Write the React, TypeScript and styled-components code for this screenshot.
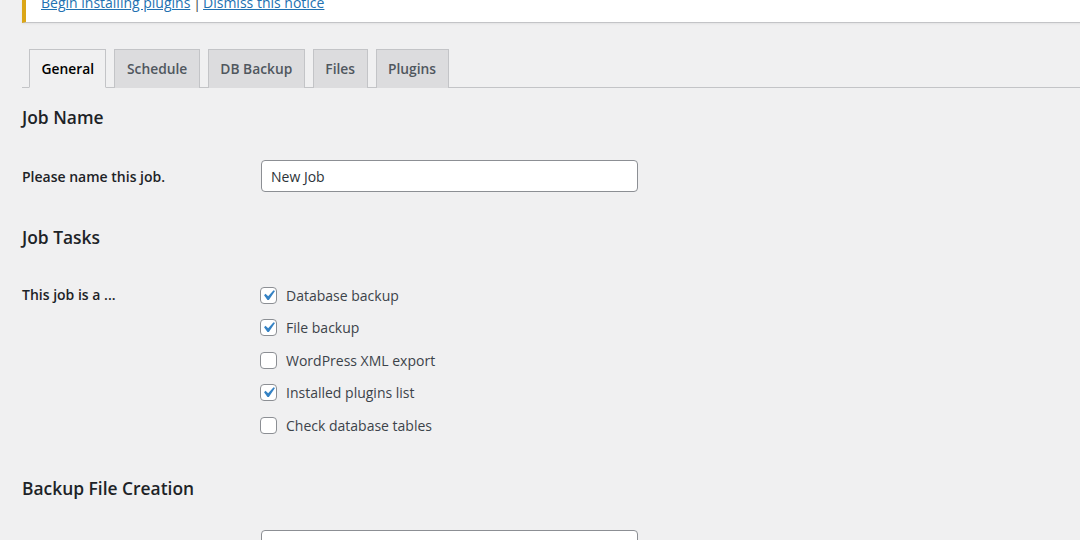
import React from "react";
import styled, { createGlobalStyle } from "styled-components";

const Global = createGlobalStyle`
  html, body { margin: 0; padding: 0; background: #f0f0f1; }
  body { font-family: "Open Sans", "Noto Sans", sans-serif; color: #1d2327; overflow: hidden; }
  * { box-sizing: border-box; }
`;

const Page = styled.div`
  width: 1080px;
  height: 540px;
  overflow: hidden;
  padding-left: 22px;
`;

const Notice = styled.div`
  height: 23px;
  margin-right: -40px;
  background: #fff;
  border: 1px solid #c3c4c7;
  border-top: none;
  border-left: 4px solid #dba617;
  box-shadow: 0 1px 2px rgba(0, 0, 0, 0.06);
  display: flex;
  align-items: flex-end;
  padding: 0 0 9px 15px;
  overflow: hidden;
  font-size: 14px;
  line-height: 20px;
  color: #3c434a;
`;

const Link = styled.a`
  color: #2271b1;
  text-decoration: underline;
`;

const Sep = styled.span`
  margin: 0 2px 0 3px;
`;

const TabBar = styled.nav`
  margin-top: 26px;
  border-bottom: 1px solid #c3c4c7;
  display: flex;
  gap: 8px;
  padding-left: 7px;
  height: 39px;
  margin-right: -40px;
`;

const Tab = styled.a<{ $active?: boolean }>`
  display: flex;
  align-items: center;
  height: 39px;
  padding: 0 11.5px;
  border: 1px solid #c3c4c7;
  border-bottom: ${(p) => (p.$active ? "1px solid #f0f0f1" : "none")};
  background: ${(p) => (p.$active ? "#f0f0f1" : "#dcdcde")};
  color: ${(p) => (p.$active ? "#000" : "#50575e")};
  font-size: 13.8px;
  font-weight: 600;
  line-height: 1;
  text-decoration: none;
`;

const Heading = styled.h2<{ $top: number }>`
  margin: ${(p) => p.$top}px 0 0;
  font-size: 17.4px;
  font-weight: 600;
  line-height: 24px;
  color: #1d2327;
`;

const Row = styled.div<{ $top: number }>`
  display: grid;
  grid-template-columns: 239px 377px;
  margin-top: ${(p) => p.$top}px;
`;

const Label = styled.div<{ $pad: number }>`
  font-size: 14px;
  font-weight: 600;
  line-height: 20px;
  color: #1d2327;
  padding-top: ${(p) => p.$pad}px;
`;

const TextInput = styled.input`
  width: 377px;
  height: 32px;
  border: 1px solid #8c8f94;
  border-radius: 4px;
  background: #fff;
  padding: 0 9px;
  font-family: inherit;
  font-size: 14px;
  color: #2c3338;
  outline: none;
`;

const CheckList = styled.div`
  display: flex;
  flex-direction: column;
  gap: 12.6px;
  padding-top: 2px;
`;

const CheckRow = styled.label`
  display: flex;
  align-items: center;
  gap: 9px;
  height: 20px;
  font-size: 14px;
  color: #3c434a;
`;

const Box = styled.span`
  position: relative;
  width: 17px;
  height: 17px;
  border: 1px solid #8c8f94;
  border-radius: 4px;
  background: #fff;
  margin-left: -1px;
  flex: none;
`;

const Tick = styled.svg`
  position: absolute;
  left: -3px;
  top: -3px;
`;

const Check = ({ on }: { on: boolean }) => (
  <Box>
    {on && (
      <Tick width="21" height="21" viewBox="0 0 20 20">
        <path d="M14.83 4.89l1.34.94-5.81 8.38H9.02L5.78 9.67l1.34-1.25 2.57 2.4z" fill="#3582c4" />
      </Tick>
    )}
  </Box>
);

const tasks = [
  { label: "Database backup", on: true },
  { label: "File backup", on: true },
  { label: "WordPress XML export", on: false },
  { label: "Installed plugins list", on: true },
  { label: "Check database tables", on: false },
];

export default function App() {
  return (
    <Page>
      <Global />
      <Notice>
        <Link href="#">Begin installing plugins</Link>
        <Sep>|</Sep>
        <Link href="#">Dismiss this notice</Link>
      </Notice>
      <TabBar>
        <Tab $active>General</Tab>
        <Tab>Schedule</Tab>
        <Tab>DB Backup</Tab>
        <Tab>Files</Tab>
        <Tab>Plugins</Tab>
      </TabBar>
      <Heading $top={17}>Job Name</Heading>
      <Row $top={31}>
        <Label $pad={7}>Please name this job.</Label>
        <TextInput defaultValue="New Job" />
      </Row>
      <Heading $top={33}>Job Tasks</Heading>
      <Row $top={34}>
        <Label $pad={2}>This job is a ...</Label>
        <CheckList>
          {tasks.map((t) => (
            <CheckRow key={t.label}>
              <Check on={t.on} />
              {t.label}
            </CheckRow>
          ))}
        </CheckList>
      </Row>
      <Heading $top={41}>Backup File Creation</Heading>
      <Row $top={30}>
        <div />
        <TextInput />
      </Row>
    </Page>
  );
}
